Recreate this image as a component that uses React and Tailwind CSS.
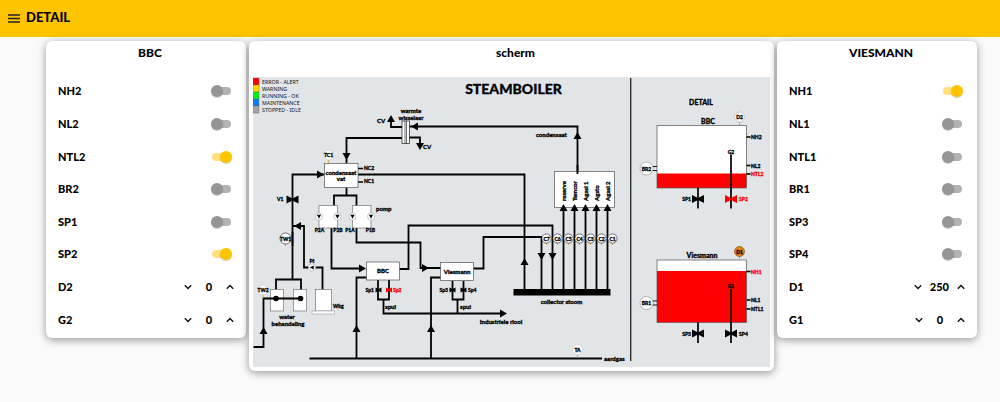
import { useState } from "react";

const bbcControls = [
  { id: "NH2", on: false },
  { id: "NL2", on: false },
  { id: "NTL2", on: true },
  { id: "BR2", on: false },
  { id: "SP1", on: false },
  { id: "SP2", on: true },
  { id: "D2", value: 0 },
  { id: "G2", value: 0 },
];

const viesmannControls = [
  { id: "NH1", on: true },
  { id: "NL1", on: false },
  { id: "NTL1", on: false },
  { id: "BR1", on: false },
  { id: "SP3", on: false },
  { id: "SP4", on: false },
  { id: "D1", value: 250 },
  { id: "G1", value: 0 },
];

function Switch({ id, initial }) {
  const [on, setOn] = useState(initial);
  return (
    <input
      id={id}
      type="checkbox"
      role="switch"
      checked={on}
      onChange={(e) => setOn(e.target.checked)}
      className="mr-[14px] grid h-3 w-[21px] cursor-pointer appearance-none items-center before:col-start-1 before:row-start-1 before:mx-px before:h-2 before:rounded-full before:bg-[#b3b3b3] before:content-[''] after:col-start-1 after:row-start-1 after:size-3 after:rounded-full after:bg-[#959595] after:shadow-[0_1px_1px_rgba(0,0,0,0.2)] after:content-[''] checked:before:bg-[#ffe07d] checked:after:justify-self-end checked:after:bg-[#ffc400]"
    />
  );
}

function Chevron({ up }) {
  return (
    <svg viewBox="0 0 8 6" className="h-[6px] w-2" fill="none" stroke="#111" strokeWidth="1.4">
      <path d={up ? "M0.8 4.8 4 1.6 7.2 4.8" : "M0.8 1.2 4 4.4 7.2 1.2"} />
    </svg>
  );
}

function Stepper({ id, initial }) {
  const [value, setValue] = useState(initial);
  const button = "flex h-5 w-[18px] cursor-pointer items-center justify-center";
  return (
    <div className="mr-[7px] flex items-center">
      <button type="button" aria-label={`${id} lower`} className={button} onClick={() => setValue(value - 1)}>
        <Chevron />
      </button>
      <output id={id} className="min-w-6 px-[3px] text-center">
        {value}
      </output>
      <button type="button" aria-label={`${id} higher`} className={button} onClick={() => setValue(value + 1)}>
        <Chevron up />
      </button>
    </div>
  );
}

function ControlPanel({ title, controls }) {
  return (
    <section className="w-1/5 min-w-[200px] max-w-[200px] shrink-0 rounded-md bg-white pb-[2px] shadow-[0_2px_8px_rgba(0,0,0,0.4)]">
      <h2 className="mb-[10px] pl-2 text-center text-[12px] leading-6">{title}</h2>
      <div className="grid min-h-[261px] auto-rows-fr text-[11px] leading-4">
        {controls.map((c) => (
          <div key={c.id} className="flex items-center justify-between pl-3">
            <label htmlFor={c.id}>{c.id}</label>
            {c.value === undefined ? <Switch id={c.id} initial={c.on} /> : <Stepper id={c.id} initial={c.value} />}
          </div>
        ))}
      </div>
    </section>
  );
}

const arrowShapes = {
  up: "M0 0 4 7H-4Z",
  down: "M0 0 4 -7H-4Z",
  left: "M0 0 7 -4V4Z",
  right: "M0 0 -7 -4V4Z",
};

/* Arrow head with its tip at (x, y). */
function Arrow({ x, y, dir }) {
  return <path d={arrowShapes[dir]} transform={`translate(${x} ${y})`} stroke="none" fill="#000" />;
}

function Valve({ x, y, w = 6, h = 4, color = "#000" }) {
  return (
    <path
      d={`M${x - w} ${y - h}L${x} ${y - 1}L${x + w} ${y - h}V${y + h}L${x} ${y + 1}L${x - w} ${y + h}Z`}
      fill={color}
      stroke="none"
    />
  );
}

function Sensor({ x, y, r = 5, label, fill = "#fff", stroke = "#999", stem = 0 }) {
  return (
    <g>
      {stem > 0 && <path d={`M${x} ${y + r}v${stem}`} stroke="#d9a93a" strokeWidth="1" />}
      <circle cx={x} cy={y} r={r} fill={fill} stroke={stroke} strokeWidth="0.7" />
      <T x={x} y={y + 2} size={5} anchor="middle">
        {label}
      </T>
    </g>
  );
}

function T({ x, y, size = 6, anchor = "start", color = "#000", children }) {
  return (
    <text x={x} y={y} fontSize={size} textAnchor={anchor} fill={color} stroke={color} strokeWidth="0.3">
      {children}
    </text>
  );
}

function Pump({ x, y, turn = 0 }) {
  return (
    <g transform={`translate(${x} ${y}) rotate(${turn})`}>
      <circle r="3.6" fill="#fff" stroke="#aaa" strokeWidth="0.6" />
      <path d="M-2.1 -1.7H2.1L0 2.3Z" fill="#000" stroke="none" />
    </g>
  );
}

const legend = [
  ["#ff0000", "ERROR - ALERT"],
  ["#ffd800", "WARNING"],
  ["#00f01c", "RUNNING - OK"],
  ["#0a7df0", "MAINTENANCE"],
  ["#a3a3a3", "STOPPED - IDLE"],
];

const consumers = [
  [563.5, "reserve"],
  [574.5, "Temcor"],
  [585.5, "Agasi 1"],
  [596.5, "Agsto"],
  [607.5, "Agasi 2"],
];

const collectorSensors = [
  [546.5, "C7"],
  [557.5, "C6"],
  [568.5, "C5"],
  [579.5, "C4"],
  [590.5, "C3"],
  [601.5, "C2"],
  [612.5, "C1"],
];

function Boiler({ top, level, name, nameY, sensor, gauge, levels, burner, valves }) {
  const bottom = top + 62.5;
  return (
    <g>
      <rect x="657" y={top} width="89.5" height="62.5" fill="#fff" stroke="none" />
      <rect x="657" y={level} width="89.5" height={bottom - level} fill="#f00" stroke="none" />
      <rect x="657" y={top} width="89.5" height="62.5" fill="none" stroke="#555" strokeWidth="0.7" />
      <T x={name === "BBC" ? 708 : 702} y={nameY} size={7} anchor="middle">
        {name}
      </T>
      {sensor}
      {levels.map(([y, label, color]) => (
        <g key={label}>
          <path d={`M746.5 ${y}h4`} strokeWidth="1.6" />
          <T x={751} y={y + 2} size={5} color={color}>
            {label}
          </T>
        </g>
      ))}
      <path d={`M652 ${top + 41}h5M652 ${top + 45}h5`} strokeWidth="0.9" />
      <Sensor x={646.5} y={top + 43} r={6.5} label={burner} />
      <path d={`M698 ${bottom}v20.5M731 ${top + 29}v54`} strokeWidth="1.7" />
      <T x={731} y={top + 28} size={5} anchor="middle">
        {gauge}
      </T>
      <Valve x={698} y={bottom + 11} />
      <Valve x={731} y={bottom + 11} color={valves[1][1]} />
      <T x={691} y={bottom + 13} size={5} anchor="end">
        {valves[0][0]}
      </T>
      <T x={739} y={bottom + 13} size={5} color={valves[1][1]}>
        {valves[1][0]}
      </T>
    </g>
  );
}

function Diagram() {
  return (
    <svg
      viewBox="253 77 517 290"
      className="block h-auto w-full bg-[#e1e5e8]"
      role="img"
      aria-label="STEAMBOILER"
      fill="none"
      stroke="#000"
      strokeWidth="1.8"
    >
      {legend.map(([color, label], i) => (
        <g key={label} stroke="none">
          <rect x="253" y={78 + i * 7} width="6" height="7" fill={color} stroke="#666" strokeWidth="0.4" />
          <text x="262" y={84 + i * 7} fontSize="5.3" fill="#111" className="font-['Noto_Sans',sans-serif] font-normal">
            {label}
          </text>
        </g>
      ))}
      <T x={513.5} y={94} size={14} anchor="middle">
        STEAMBOILER
      </T>

      {/* heat exchanger */}
      <T x={411} y={113} anchor="middle">warmte</T>
      <path d="M391 121V127H402M409 126.5H577.5V174M409 137.5H420V144M402 138H346.5V163" />
      <rect x="402" y="121" width="7.5" height="22.5" fill="#fff" stroke="#333" strokeWidth="0.8" />
      <path d="M405 121v22.5M406.5 121v22.5" stroke="#333" strokeWidth="0.7" />
      <T x={411} y={120} anchor="middle">wisselaar</T>
      <Arrow x={391} y={115} dir="up" />
      <Arrow x={411} y={126.5} dir="left" />
      <Arrow x={420} y={150} dir="down" />
      <Arrow x={346.5} y={160} dir="down" />
      <Arrow x={577.5} y={132} dir="up" />
      <T x={377} y={123}>CV</T>
      <T x={423} y={149}>CV</T>
      <T x={536} y={137}>condensaat</T>

      {/* condensate tank */}
      <path d="M358 174.5H524.5V290M324 174.5H292.5V279.5M346.5 187V195.5M334 206V195.5H356.5V206" />
      <path d="M358 168.5h5M358 182h5" strokeWidth="1.6" />
      <rect x="324.5" y="163.5" width="33.5" height="24" fill="#fff" stroke="#555" strokeWidth="0.7" />
      <T x={341} y={175} anchor="middle">condensaat</T>
      <T x={341} y={181} anchor="middle">vat</T>
      <T x={364} y={170} size={5}>NC2</T>
      <T x={364} y={183} size={5}>NC1</T>
      <Sensor x={328.5} y={155} label="TC1" stroke="#ccc" stem={3} />
      <Arrow x={324} y={174.5} dir="right" />
      <Valve x={292.5} y={199.5} />
      <T x={277} y={201} size={5}>V1</T>

      {/* pumps */}
      <path d="M331.5 228V268.5H362M356.5 228V242.5H420.5V268H441" />
      <rect x="319" y="205.5" width="18.5" height="22.5" fill="#fff" stroke="#777" strokeWidth="0.7" />
      <rect x="352.5" y="205.5" width="18.5" height="22.5" fill="#fff" stroke="#777" strokeWidth="0.7" />
      <Pump x={319} y={216.5} />
      <Pump x={337.5} y={216.5} />
      <Pump x={352.5} y={216.5} />
      <Pump x={371} y={216.5} />
      <T x={376} y={211}>pomp</T>
      <T x={319.5} y={232} size={5} anchor="middle">P2A</T>
      <T x={338} y={232} size={5} anchor="middle">P2B</T>
      <T x={350} y={232} size={5} anchor="middle">P1A</T>
      <T x={370.5} y={232} size={5} anchor="middle">P1B</T>

      {/* water treatment */}
      <path d="M276 290V279.5H301V290M293 226H304V267.5H322.5V290" />
      <rect x="270.5" y="289.5" width="13" height="21.5" fill="#fff" stroke="#777" strokeWidth="0.7" />
      <rect x="293.5" y="289.5" width="13" height="21.5" fill="#fff" stroke="#777" strokeWidth="0.7" />
      <rect x="315.5" y="289.5" width="16" height="21.5" fill="#fff" stroke="#777" strokeWidth="0.7" />
      <rect x="312" y="311" width="22.5" height="3" fill="#fff" stroke="#999" strokeWidth="0.6" />
      <path d="M301 298.5H263.5V347H253.5" />
      <circle cx="276" cy="298.5" r="2.8" fill="#000" stroke="none" />
      <circle cx="300.5" cy="298.5" r="2.8" fill="#000" stroke="none" />
      <Arrow x={263.5} y={327} dir="up" />
      <Arrow x={294} y={226} dir="left" />
      <Pump x={312} y={267.5} turn={90} />
      <Sensor x={285.5} y={238.5} r={5.5} label="TW1" stroke="#333" stem={2} />
      <path d="M292.5 232V246" />
      <Sensor x={263} y={290} label="TW2" stroke="#ccc" stem={3} />
      <T x={312} y={263} size={5} anchor="middle">Pt</T>
      <T x={333} y={308} size={5}>Wkg</T>
      <T x={287} y={319} anchor="middle">water</T>
      <T x={288} y={326} anchor="middle">behandeling</T>

      {/* boilers and their supply lines */}
      <path d="M399 269H408.5V225.5H552.5V290M473 268.5H483.5V237H541.5V290" />
      <path d="M309.5 358.5H602M356.5 358.5V277.5H367M431 358.5V277.5H441" />
      <path d="M378 280V299.5H389V280M383.5 299.5V313.5H501M452.5 281V299.5H463.5V281M457.5 299.5V313.5" />
      <rect x="366.5" y="262" width="33" height="18" fill="#fff" stroke="#555" strokeWidth="0.7" />
      <rect x="440.5" y="262.5" width="33" height="18" fill="#fff" stroke="#555" strokeWidth="0.7" />
      <T x={383} y={273} anchor="middle">BBC</T>
      <T x={457} y={274} anchor="middle">Viesmann</T>
      <Arrow x={366} y={268.5} dir="right" />
      <Arrow x={429} y={268} dir="right" />
      <Arrow x={507} y={313.5} dir="right" />
      <Arrow x={356.5} y={325} dir="up" />
      <Arrow x={431} y={325} dir="up" />
      <Valve x={378.5} y={290} w={3} h={2.5} />
      <Valve x={389} y={290} w={3} h={2.5} color="#f00" />
      <Valve x={452.5} y={290} w={3} h={2.5} />
      <Valve x={463.5} y={290} w={3} h={2.5} />
      <T x={374} y={292} size={5} anchor="end">Sp1</T>
      <T x={393} y={292} size={5} color="#f00">Sp2</T>
      <T x={448} y={292} size={5} anchor="end">Sp3</T>
      <T x={468} y={292} size={5}>Sp4</T>
      <T x={385} y={309}>spui</T>
      <T x={460} y={309}>spui</T>
      <T x={501} y={324} anchor="middle">Industriele riool</T>
      <T x={604} y={361}>aardgas</T>
      <Sensor x={577.5} y={349.5} label="TA" stroke="#ccc" stem={3} />

      {/* steam collector */}
      <rect x="554.5" y="171.5" width="60" height="36" fill="#fff" stroke="#555" strokeWidth="0.7" />
      <path d="M577.5 165V174" />
      {consumers.map(([x, label]) => (
        <g key={label}>
          <path d={`M${x} 290V209`} />
          <Arrow x={x} y={204} dir="up" />
          <text
            transform={`translate(${x + 2} 201) rotate(-90)`}
            fontSize="6"
            fill="#000"
            strokeWidth="0.3"
          >
            {label}
          </text>
        </g>
      ))}
      {collectorSensors.map(([x, label]) => (
        <Sensor key={label} x={x} y={238.5} r={4.6} label={label} stroke="#333" stem={2} />
      ))}
      <Arrow x={524.5} y={258} dir="up" />
      <Arrow x={541.5} y={260} dir="down" />
      <Arrow x={552.5} y={260} dir="down" />
      <rect x="513.5" y="289" width="97" height="6.5" fill="#000" stroke="none" />
      <T x={561.5} y={304} anchor="middle">collector stoom</T>

      {/* detail of both boilers */}
      <path d="M630.7 78V361" strokeWidth="1.3" stroke="#222" />
      <T x={701} y={105} size={7} anchor="middle">DETAIL</T>
      <Boiler
        top={125.5}
        level={173.5}
        name="BBC"
        nameY={124}
        gauge="G2"
        burner="BR2"
        sensor={<Sensor x={739.5} y={117} label="D2" stroke="#bbb" stem={3} />}
        levels={[[137, "NH2", "#000"], [165.5, "NL2", "#000"], [174, "NTL2", "#f00"]]}
        valves={[["SP1", "#000"], ["SP2", "#f00"]]}
      />
      <Boiler
        top={260}
        level={271}
        name="Viesmann"
        nameY={258}
        gauge="G1"
        burner="BR1"
        sensor={<Sensor x={739.5} y={251.5} label="D1" fill="#e8861c" stroke="#8a4b08" stem={3} />}
        levels={[[271.5, "NH1", "#f00"], [300, "NL1", "#000"], [309, "NTL1", "#000"]]}
        valves={[["SP3", "#000"], ["SP4", "#000"]]}
      />
    </svg>
  );
}

export default function App() {
  return (
    <div className="min-h-screen bg-[#fafafa] font-['Lato_Black','Lato',sans-serif] font-black text-black">
      <header className="flex items-start gap-[6px] bg-[#ffc400] px-2 py-[6px]">
        <button type="button" aria-label="Menu" className="flex h-[25px] cursor-pointer items-center">
          <svg viewBox="0 0 12 9" className="h-[9px] w-3" stroke="#222" strokeWidth="1.4">
            <path d="M0 1h12M0 4.5h12M0 8h12" />
          </svg>
        </button>
        <h1 className="text-[13px] leading-[22px]">DETAIL</h1>
      </header>
      <main className="flex items-start gap-[3px] pt-1 pr-[23px] pb-8 pl-[46px]">
        <ControlPanel title="BBC" controls={bbcControls} />
        <section className="min-w-0 flex-1 rounded-md bg-white px-1 pb-1 shadow-[0_2px_8px_rgba(0,0,0,0.4)]">
          <h2 className="mb-3 pl-2 text-center text-[12px] leading-6">scherm</h2>
          <Diagram />
        </section>
        <ControlPanel title="VIESMANN" controls={viesmannControls} />
      </main>
    </div>
  );
}
